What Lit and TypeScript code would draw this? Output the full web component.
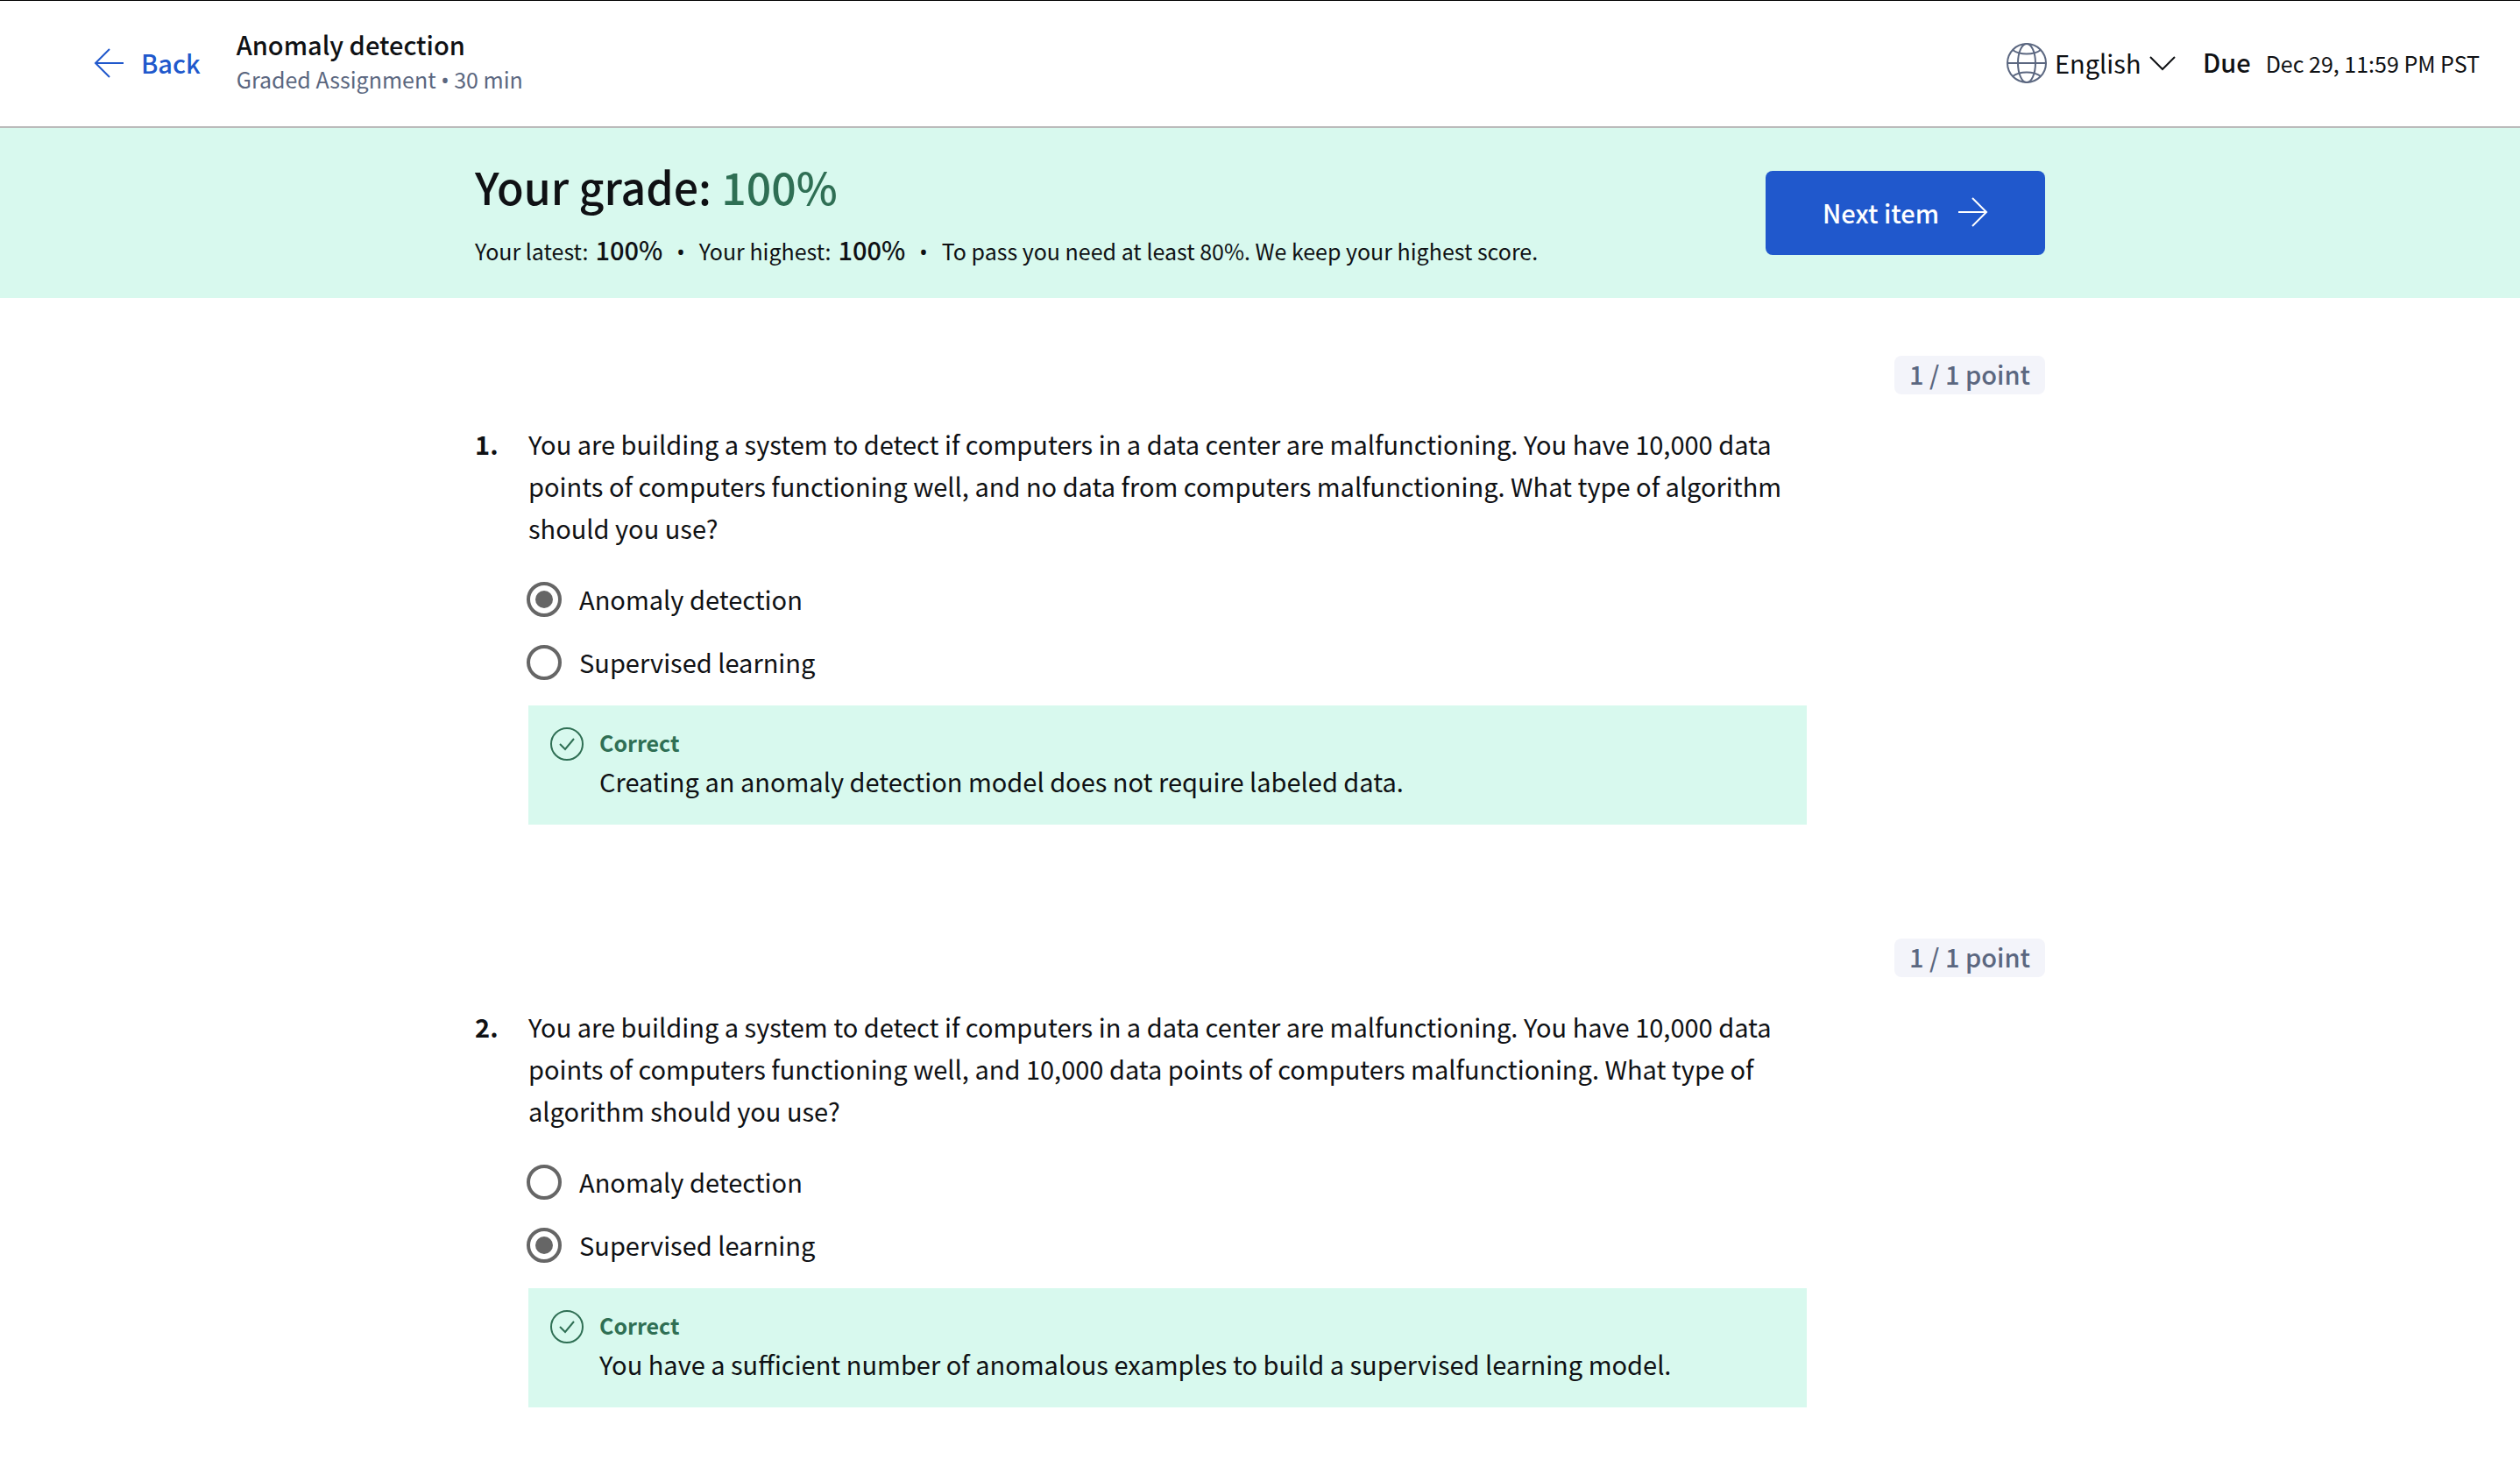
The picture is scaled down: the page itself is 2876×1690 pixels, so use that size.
import { LitElement, html, css, svg } from "lit";
import { customElement, property } from "lit/decorators.js";

interface Question {
  number: number;
  points: string;
  prompt: string;
  options: string[];
  answer: number;
  feedback: string;
}

const QUESTIONS: Question[] = [
  {
    number: 1,
    points: "1 / 1 point",
    prompt:
      "You are building a system to detect if computers in a data center are malfunctioning. You have 10,000 data points of computers functioning well, and no data from computers malfunctioning. What type of algorithm should you use?",
    options: ["Anomaly detection", "Supervised learning"],
    answer: 0,
    feedback: "Creating an anomaly detection model does not require labeled data.",
  },
  {
    number: 2,
    points: "1 / 1 point",
    prompt:
      "You are building a system to detect if computers in a data center are malfunctioning. You have 10,000 data points of computers functioning well, and 10,000 data points of computers malfunctioning. What type of algorithm should you use?",
    options: ["Anomaly detection", "Supervised learning"],
    answer: 1,
    feedback: "You have a sufficient number of anomalous examples to build a supervised learning model.",
  },
];

const base = css`
  :host {
    --ink: #0f1114;
    --muted: #5b6780;
    --blue: #2058cc;
    --green: #2f6f54;
    --mint: #d8f9ee;
    --text-m: 29px;
    --text-s: 25px;
    display: block;
    color: var(--ink);
    font-family: "Noto Sans CJK SC", "Open Sans", sans-serif;
    font-size: var(--text-m);
    line-height: 48px;
  }
  *,
  *::before {
    box-sizing: border-box;
  }
  svg {
    display: block;
    flex: none;
    fill: none;
    stroke: currentColor;
    stroke-width: 2;
  }
  .dot {
    font-family: "Noto Sans", sans-serif;
  }
`;

@customElement("assignment-header")
export class AssignmentHeader extends LitElement {
  static styles = [
    base,
    css`
      .bar {
        display: flex;
        align-items: center;
        justify-content: space-between;
        min-height: 146px;
        padding: 0 46px 4px 107px;
        border-top: 1px solid #000;
        border-bottom: 2px solid #bbb;
        background: #fff;
      }
      .bar svg {
        margin-top: 2px;
      }
      .side {
        display: flex;
        align-items: center;
      }
      .back {
        display: flex;
        align-items: center;
        gap: 18px;
        margin-right: 41px;
        color: var(--blue);
        font-weight: 500;
        text-decoration: none;
      }
      .title {
        margin: 0;
        font-size: var(--text-m);
        font-weight: 500;
        line-height: 40px;
      }
      .meta {
        margin: 0;
        color: var(--muted);
        font-size: var(--text-s);
        line-height: 40px;
      }
      .language {
        display: flex;
        align-items: center;
        margin-right: 30px;
      }
      .globe {
        margin-right: 8px;
        color: var(--muted);
      }
      .select {
        appearance: none;
        margin: 0 8px 0 0;
        padding: 0;
        border: 0;
        background: none;
        color: inherit;
        font: inherit;
      }
      .due {
        display: flex;
        align-items: baseline;
        gap: 17px;
        margin: 0;
      }
      .due strong {
        font-weight: 500;
      }
      .date {
        font-size: var(--text-s);
      }
    `,
  ];

  render() {
    return html`
      <header class="bar">
        <div class="side">
          <a class="back" href="#">
            <svg width="36" height="36" viewBox="0 0 36 36" aria-hidden="true">
              <path d="M34 18H2M18 2 2 18l16 16" />
            </svg>
            Back
          </a>
          <div>
            <h1 class="title">Anomaly detection</h1>
            <p class="meta">Graded Assignment <span class="dot">•</span> 30 min</p>
          </div>
        </div>
        <div class="side">
          <div class="language">
            <svg class="globe" width="48" height="48" viewBox="0 0 48 48" aria-hidden="true">
              <circle cx="24" cy="24" r="22" />
              <ellipse cx="24" cy="24" rx="10" ry="22" />
              <path d="M2 24h44M8 9c4 3 10 4.500 16 4.500S36 12 40 9M8 39c4-3 10-4.500 16-4.500S36 36 40 39" />
            </svg>
            <select class="select" aria-label="Language">
              <option>English</option>
            </select>
            <svg width="32" height="18" viewBox="0 0 32 18" aria-hidden="true">
              <path d="M2 2l14 14L30 2" />
            </svg>
          </div>
          <p class="due"><strong>Due</strong><span class="date">Dec 29, 11:59 PM PST</span></p>
        </div>
      </header>
    `;
  }
}

@customElement("grade-banner")
export class GradeBanner extends LitElement {
  static styles = [
    base,
    css`
      .banner {
        padding: 30px 40px;
        background: var(--mint);
      }
      .inner {
        display: flex;
        align-items: center;
        justify-content: space-between;
        max-width: 1792px;
        margin: 0 auto;
      }
      .grade {
        margin: 0 0 14px;
        font-size: 50px;
        font-weight: 500;
        line-height: 72px;
      }
      .score {
        color: var(--green);
      }
      .stats {
        display: flex;
        flex-wrap: wrap;
        align-items: baseline;
        gap: 0 16px;
        margin: 0;
        padding: 0;
        list-style: none;
        font-size: var(--text-s);
        line-height: 45px;
      }
      .stat {
        display: flex;
        align-items: baseline;
        gap: 8px;
      }
      .stat strong {
        font-size: var(--text-m);
        font-weight: 500;
      }
      .next {
        display: flex;
        align-items: center;
        justify-content: center;
        gap: 20px;
        min-height: 96px;
        padding: 0 65px 2px;
        border: 0;
        border-radius: 8px;
        background: var(--blue);
        color: #fff;
        font: inherit;
        font-weight: 500;
        cursor: pointer;
      }
    `,
  ];

  render() {
    return html`
      <section class="banner">
        <div class="inner">
          <div>
            <h2 class="grade">Your grade: <span class="score">100%</span></h2>
            <ul class="stats">
              <li class="stat">Your latest: <strong>100%</strong></li>
              <li class="dot" aria-hidden="true">•</li>
              <li class="stat">Your highest: <strong>100%</strong></li>
              <li class="dot" aria-hidden="true">•</li>
              <li class="stat">To pass you need at least 80%. We keep your highest score.</li>
            </ul>
          </div>
          <button class="next" type="button">
            Next item
            <svg width="36" height="36" viewBox="0 0 36 36" aria-hidden="true">
              <path d="M2 18h32M18 2l16 16-16 16" />
            </svg>
          </button>
        </div>
      </section>
    `;
  }
}

@customElement("quiz-question")
export class QuizQuestion extends LitElement {
  @property({ attribute: false }) question!: Question;

  static styles = [
    base,
    css`
      .points {
        display: block;
        width: fit-content;
        margin: 0 0 32px auto;
        padding: 0 17px 4px;
        border-radius: 8px;
        background: #f3f4fa;
        color: var(--muted);
        font-weight: 500;
        line-height: 40px;
      }
      .question {
        display: grid;
        grid-template-columns: 61px minmax(0, 1fr);
        padding-right: 272px;
      }
      .number {
        font-weight: 700;
      }
      .prompt {
        margin: 0 0 22px;
      }
      .options {
        min-width: 0;
        margin: 0 0 13px -2px;
        padding: 0;
        border: 0;
      }
      .option {
        display: flex;
        align-items: center;
        gap: 20px;
        width: fit-content;
        min-height: 72px;
        padding-bottom: 2px;
      }
      .radio {
        appearance: none;
        display: grid;
        place-items: center;
        width: 40px;
        height: 40px;
        margin: 2px 0 0;
        border: 4px solid #666;
        border-radius: 50%;
        background: #fff;
      }
      .radio:checked::before {
        content: "";
        width: 20px;
        height: 20px;
        border-radius: 50%;
        background: #666;
      }
      .feedback {
        display: flex;
        gap: 17px;
        padding: 22px 24px 26px;
        background: var(--mint);
      }
      .check {
        margin-top: 2px;
        color: var(--green);
      }
      .verdict {
        margin: 0;
        color: var(--green);
        font-size: var(--text-s);
        font-weight: 700;
        line-height: 40px;
      }
      .explanation {
        margin: 0;
      }
    `,
  ];

  render() {
    const q = this.question;
    return html`
      <span class="points">${q.points}</span>
      <div class="question">
        <span class="number">${q.number}.</span>
        <div>
          <p class="prompt" id="prompt">${q.prompt}</p>
          <fieldset class="options" aria-labelledby="prompt">
            ${q.options.map(
              (text, i) => html`
                <label class="option">
                  <input class="radio" type="radio" name="answer" ?checked=${i === q.answer} />
                  ${text}
                </label>
              `,
            )}
          </fieldset>
          <div class="feedback">
            <svg class="check" width="40" height="40" viewBox="0 0 40 40" aria-hidden="true">
              ${svg`<circle cx="20" cy="20" r="18" /><path d="M12 20l6 6 10-12" />`}
            </svg>
            <div>
              <p class="verdict">Correct</p>
              <p class="explanation">${q.feedback}</p>
            </div>
          </div>
        </div>
      </div>
    `;
  }
}

@customElement("app-root")
export class AppRoot extends LitElement {
  static styles = css`
    :host {
      display: block;
      min-height: 100vh;
      background: #fff;
    }
    .questions {
      display: grid;
      gap: 130px;
      max-width: 1792px;
      margin: 0 auto;
      padding: 66px 0 80px;
    }
  `;

  render() {
    return html`
      <assignment-header></assignment-header>
      <grade-banner></grade-banner>
      <main class="questions">
        ${QUESTIONS.map((q) => html`<quiz-question .question=${q}></quiz-question>`)}
      </main>
    `;
  }
}
